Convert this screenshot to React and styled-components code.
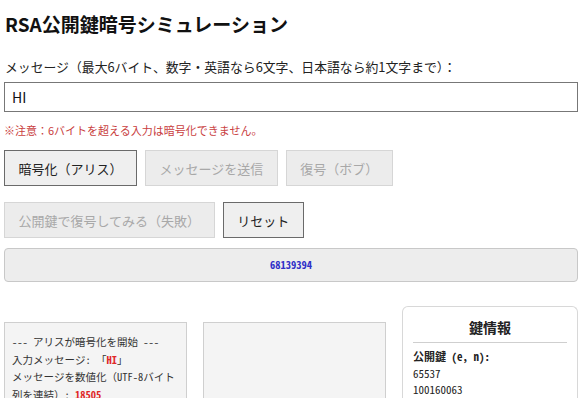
import styled, { createGlobalStyle } from "styled-components";

const GlobalStyle = createGlobalStyle`
  body {
    margin: 0;
    background: #fff;
    font-family: "Noto Sans CJK JP", "Noto Sans", sans-serif;
    color: #222;
  }
`;

const mono = `"Noto Sans Mono CJK JP", "Noto Sans CJK JP", monospace`;

const Page = styled.div`
  padding: 0 2px 0 4px;
  width: 580px;
  box-sizing: border-box;
`;

const Title = styled.h1`
  margin: 0;
  padding-top: 12px;
  padding-left: 1px;
  font-size: 19px;
  line-height: 24px;
  font-weight: 700;
  color: #111;
`;

const Label = styled.label`
  display: block;
  margin-top: 21px;
  padding-left: 1px;
  font-size: 12.85px;
  line-height: 20px;
  color: #222;
`;

const Input = styled.input`
  display: block;
  margin-top: 5px;
  width: 100%;
  height: 30px;
  box-sizing: border-box;
  border: 1px solid #777;
  padding: 0 7px;
  font-family: "Noto Sans CJK JP", sans-serif;
  font-size: 14px;
  color: #111;
  outline: none;
`;

const Warning = styled.p`
  margin: 10px 0 0;
  font-size: 11px;
  line-height: 16px;
  color: #c94040;
`;

const ButtonRow = styled.div`
  display: flex;
  gap: 8px;
  margin-top: ${(p) => p.$top}px;
`;

const Button = styled.button`
  height: 36px;
  padding: 0 13.5px;
  font-family: "Noto Sans CJK JP", sans-serif;
  font-size: 13px;
  background: ${(p) => (p.disabled ? "#ececec" : "#efefef")};
  color: ${(p) => (p.disabled ? "#a8a8a8" : "#222")};
  border: 1px solid ${(p) => (p.disabled ? "#d6d6d6" : "#6a6a6a")};
  border-radius: 0;
`;

const CipherBar = styled.div`
  margin-top: 10px;
  height: 34px;
  box-sizing: border-box;
  border: 1px solid #c8c8c8;
  border-radius: 4px;
  background: #ededed;
  display: flex;
  align-items: center;
  justify-content: center;
  padding-bottom: 1px;
  font-family: ${mono};
  font-size: 10.5px;
  font-weight: 700;
  color: #3030c8;
`;

const Panels = styled.div`
  display: grid;
  grid-template-columns: 183px 183px 1fr;
  gap: 16px;
  align-items: start;
  margin-top: 24px;
`;

const LogBox = styled.div`
  margin-top: 16px;
  height: 76px;
  overflow: hidden;
  box-sizing: border-box;
  background: #f4f4f4;
  border: 1px solid #cfcfcf;
  border-bottom: 0;
  padding: 10px 7px 0;
  font-family: ${mono};
  font-size: 10.5px;
  line-height: 17.6px;
  color: #333;
`;

const Hl = styled.span`
  color: #e02828;
  font-weight: 700;
`;

const KeyCard = styled.div`
  height: 92px;
  overflow: hidden;
  box-sizing: border-box;
  border: 1px solid #d8d8d8;
  border-bottom: 0;
  border-radius: 6px 6px 0 0;
  background: #fff;
  padding: 10px 10px 0;
`;

const KeyTitle = styled.h3`
  margin: 0;
  text-align: center;
  font-size: 14px;
  line-height: 20px;
  font-weight: 700;
  color: #222;
`;

const Rule = styled.hr`
  margin: 5px 0 5px;
  border: 0;
  border-top: 1px solid #cfcfcf;
`;

const KeyLine = styled.div`
  font-family: ${mono};
  font-size: 11px;
  line-height: 16.5px;
  font-weight: ${(p) => (p.$bold ? 700 : 400)};
  color: #222;
`;

export default function App() {
  return (
    <Page>
      <GlobalStyle />
      <Title>RSA公開鍵暗号シミュレーション</Title>
      <Label>メッセージ（最大6バイト、数字・英語なら6文字、日本語なら約1文字まで）：</Label>
      <Input defaultValue="HI" />
      <Warning>※注意：6バイトを超える入力は暗号化できません。</Warning>
      <ButtonRow $top={12}>
        <Button>暗号化（アリス）</Button>
        <Button disabled>メッセージを送信</Button>
        <Button disabled>復号（ボブ）</Button>
      </ButtonRow>
      <ButtonRow $top={16}>
        <Button disabled>公開鍵で復号してみる（失敗）</Button>
        <Button>リセット</Button>
      </ButtonRow>
      <CipherBar>68139394</CipherBar>
      <Panels>
        <LogBox>
          <div>--- アリスが暗号化を開始 ---</div>
          <div>
            入力メッセージ: 「<Hl>HI</Hl>」
          </div>
          <div>
            メッセージを数値化（UTF-8バイト列を連結）: <Hl>18505</Hl>
          </div>
        </LogBox>
        <LogBox />
        <KeyCard>
          <KeyTitle>鍵情報</KeyTitle>
          <Rule />
          <KeyLine $bold>公開鍵 (e, n):</KeyLine>
          <KeyLine>65537</KeyLine>
          <KeyLine>100160063</KeyLine>
        </KeyCard>
      </Panels>
    </Page>
  );
}
